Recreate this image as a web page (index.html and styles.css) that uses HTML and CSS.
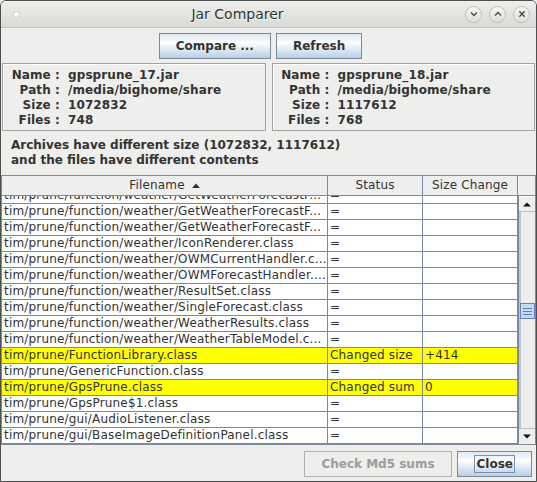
FILE: index.html
```html
<!DOCTYPE html>
<html lang="en">
<head>
    <meta charset="UTF-8">
    <title>Jar Comparer</title>
    <link rel="stylesheet" href="styles.css">
</head>
<body>
<div class="window">

    <!-- Title bar -->
    <div class="titlebar">
        <span class="menu-dot"></span>
        <span class="title">Jar Comparer</span>
        <div class="controls">
            <span class="ctl"><svg width="8" height="8" viewBox="0 0 8 8"><path d="M1 2.5 L4 5.5 L7 2.5" fill="none" stroke="#4a4a4a" stroke-width="1.4"/></svg></span>
            <span class="ctl"><svg width="8" height="8" viewBox="0 0 8 8"><path d="M1 5.5 L4 2.5 L7 5.5" fill="none" stroke="#4a4a4a" stroke-width="1.4"/></svg></span>
            <span class="ctl"><svg width="8" height="8" viewBox="0 0 8 8"><path d="M1.3 1.3 L6.7 6.7 M6.7 1.3 L1.3 6.7" fill="none" stroke="#4a4a4a" stroke-width="1.4"/></svg></span>
        </div>
    </div>

    <!-- Buttons -->
    <div class="toolbar">
        <button class="btn">Compare ...</button>
        <button class="btn">Refresh</button>
    </div>

    <!-- Archive details -->
    <div class="info">
        <div class="panel">
            <span class="lbl">Name :</span><span>gpsprune_17.jar</span>
            <span class="lbl">Path :</span><span>/media/bighome/share</span>
            <span class="lbl">Size :</span><span>1072832</span>
            <span class="lbl">Files :</span><span>748</span>
        </div>
        <div class="panel">
            <span class="lbl">Name :</span><span>gpsprune_18.jar</span>
            <span class="lbl">Path :</span><span>/media/bighome/share</span>
            <span class="lbl">Size :</span><span>1117612</span>
            <span class="lbl">Files :</span><span>768</span>
        </div>
    </div>

    <p class="message">Archives have different size (1072832, 1117612)<br>and the files have different contents</p>

    <!-- Results table -->
    <div class="table">
        <div class="thead">
            <div class="th">Filename <svg class="sort" width="8" height="5" viewBox="0 0 8 5"><path d="M0 5 L4 0.5 L8 5 Z" fill="#1d3552"/></svg></div>
            <div class="th">Status</div>
            <div class="th">Size Change</div>
            <div class="th corner"></div>
        </div>
        <div class="tbody">
            <div class="viewport">
                <div class="rows">
                    <div class="row"><span>tim/prune/function/weather/GetWeatherForecastF...</span><span>=</span><span></span></div>
                    <div class="row"><span>tim/prune/function/weather/GetWeatherForecastF...</span><span>=</span><span></span></div>
                    <div class="row"><span>tim/prune/function/weather/GetWeatherForecastF...</span><span>=</span><span></span></div>
                    <div class="row"><span>tim/prune/function/weather/IconRenderer.class</span><span>=</span><span></span></div>
                    <div class="row"><span>tim/prune/function/weather/OWMCurrentHandler.c...</span><span>=</span><span></span></div>
                    <div class="row"><span>tim/prune/function/weather/OWMForecastHandler....</span><span>=</span><span></span></div>
                    <div class="row"><span>tim/prune/function/weather/ResultSet.class</span><span>=</span><span></span></div>
                    <div class="row"><span>tim/prune/function/weather/SingleForecast.class</span><span>=</span><span></span></div>
                    <div class="row"><span>tim/prune/function/weather/WeatherResults.class</span><span>=</span><span></span></div>
                    <div class="row"><span>tim/prune/function/weather/WeatherTableModel.c...</span><span>=</span><span></span></div>
                    <div class="row changed"><span>tim/prune/FunctionLibrary.class</span><span>Changed size</span><span>+414</span></div>
                    <div class="row"><span>tim/prune/GenericFunction.class</span><span>=</span><span></span></div>
                    <div class="row changed"><span>tim/prune/GpsPrune.class</span><span>Changed sum</span><span>0</span></div>
                    <div class="row"><span>tim/prune/GpsPrune$1.class</span><span>=</span><span></span></div>
                    <div class="row"><span>tim/prune/gui/AudioListener.class</span><span>=</span><span></span></div>
                    <div class="row"><span>tim/prune/gui/BaseImageDefinitionPanel.class</span><span>=</span><span></span></div>
                </div>
            </div>
            <div class="scrollbar">
                <div class="arrow"><svg width="8" height="5" viewBox="0 0 8 5"><path d="M0 4.5 L4 0.5 L8 4.5 Z" fill="#111"/></svg></div>
                <div class="track">
                    <div class="thumb"><i></i><i></i><i></i></div>
                </div>
                <div class="arrow"><svg width="8" height="5" viewBox="0 0 8 5"><path d="M0 0.5 L4 4.5 L8 0.5 Z" fill="#111"/></svg></div>
            </div>
        </div>
    </div>

    <!-- Bottom buttons -->
    <div class="footer">
        <button class="btn disabled">Check Md5 sums</button>
        <button class="btn"><span class="focus">Close</span></button>
    </div>

</div>
</body>
</html>
```

FILE: styles.css
```css
body {
    margin: 0;
    font-family: "DejaVu Sans", sans-serif;
    font-size: 12px;
    color: #333;
    background: #eeeeec;
}
.window {
    width: 537px;
    height: 482px;
    box-sizing: border-box;
    border: 1px solid #4e4e4e;
    border-radius: 6px 6px 0 0;
    background: #eeeeec;
    overflow: hidden;
    display: flex;
    flex-direction: column;
}

/* title bar */
.titlebar {
    height: 26px;
    flex: none;
    border-bottom: 1px solid #c4c4c0;
    background: linear-gradient(#efefed, #d9d9d5);
    display: flex;
    align-items: center;
}
.menu-dot {
    width: 5px;
    height: 5px;
    margin-left: 12px;
    border-radius: 50%;
    background: #fff;
    border: 1px solid #c8c8c4;
}
.title {
    flex: 1;
    text-align: center;
    padding-right: 10px;
    font-size: 14px;
    color: #2e3436;
    text-shadow: 0 1px #fafafa;
}
.controls {
    display: flex;
    gap: 7px;
    margin-right: 6px;
}
.ctl {
    width: 15px;
    height: 15px;
    border-radius: 50%;
    border: 1px solid #bdbdb9;
    background: linear-gradient(#f6f6f5, #dededb);
    display: flex;
    align-items: center;
    justify-content: center;
}

/* buttons */
.toolbar {
    display: flex;
    justify-content: center;
    gap: 5px;
    padding: 5px 16px 0 0;
}
.btn {
    height: 26px;
    box-sizing: border-box;
    padding: 0 16px;
    border: 1px solid #7a8a99;
    background: linear-gradient(#dde8f3 0%, #f4f8fb 28%, #ffffff 34%, #b8cfe5 100%);
    font-family: "DejaVu Sans", sans-serif;
    font-weight: bold;
    font-size: 12px;
    color: #333;
}
.btn.disabled {
    border-color: #b0b0b0;
    background: #eeeeec;
    color: #9c9c9c;
}
.focus {
    display: inline-block;
    padding: 1px 1px 1px 2px;
    line-height: 14px;
    border: 1px solid #7d8fae;
}

/* archive panels */
.info {
    display: grid;
    grid-template-columns: 1fr 1fr;
    gap: 6px;
    margin: 4px 1px 0;
}
.panel {
    height: 68px;
    box-sizing: border-box;
    border: 1px solid #a2a2a0;
    box-shadow: inset 1px 1px #fff;
    padding-top: 4px;
    display: grid;
    grid-template-columns: 57px 1fr;
    column-gap: 8px;
    align-content: start;
    line-height: 15px;
    font-weight: bold;
    letter-spacing: 0.1px;
}
.lbl {
    text-align: right;
}
.message {
    margin: 7px 0 0;
    padding-left: 10px;
    line-height: 15px;
    font-weight: bold;
}

/* table */
.table {
    margin-top: 7px;
    border: 1px solid #7f8b98;
}
.thead {
    display: grid;
    grid-template-columns: 326px 95px 95px 17px;
    height: 20px;
    background: #eeeeee;
}
.th {
    box-sizing: border-box;
    border-right: 1px solid #7a8a99;
    border-bottom: 1px solid #7a8a99;
    text-align: center;
    line-height: 19px;
    white-space: nowrap;
    letter-spacing: 0.15px;
}
.th.corner {
    border-right: none;
}
.sort {
    margin-left: 3px;
    vertical-align: 1px;
}
.tbody {
    display: flex;
    height: 248px;
}
.viewport {
    width: 516px;
    overflow: hidden;
    background: #fff;
}
.rows {
    margin-top: -8px;
}
.row {
    display: grid;
    grid-template-columns: 326px 95px 95px;
    height: 16px;
    box-sizing: border-box;
    border-bottom: 1px solid #7a8a99;
    line-height: 15px;
    color: #333;
    letter-spacing: 0.18px;
}
.row span {
    box-sizing: border-box;
    border-right: 1px solid #7a8a99;
    padding-left: 2px;
    white-space: nowrap;
    overflow: hidden;
}
.row.changed {
    background: #ffff00;
}

/* scrollbar */
.scrollbar {
    width: 17px;
    box-sizing: border-box;
    border-left: 1px solid #7a8a99;
    display: flex;
    flex-direction: column;
    background: #eeeeee;
}
.arrow {
    height: 16px;
    flex: none;
    box-sizing: border-box;
    border-top: 1px solid #fff;
    border-bottom: 1px solid #b8c4d2;
    background: #eeeeee;
    display: flex;
    align-items: center;
    justify-content: center;
}
.arrow:last-child {
    border-top: 1px solid #b8c4d2;
    border-bottom: none;
}
.track {
    flex: 1;
    box-shadow: inset 2px 0 #b7c6d9;
}
.thumb {
    height: 16px;
    margin: 91px 0 0 1px;
    box-sizing: border-box;
    border: 1px solid #6382bf;
    background: #c8d8ee;
    display: flex;
    flex-direction: column;
    justify-content: center;
    gap: 2px;
    padding: 0 2px;
}
.thumb i {
    display: block;
    height: 1px;
    background: #5f80c0;
}

/* bottom */
.footer {
    display: flex;
    justify-content: flex-end;
    gap: 5px;
    padding: 6px 4px 0 0;
}
```
